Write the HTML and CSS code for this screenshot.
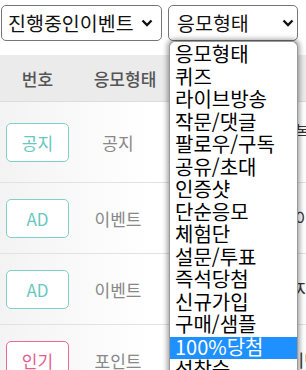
FILE: index.html
```html
<!DOCTYPE html>
<html lang="ko">
<head>
    <meta charset="UTF-8">
    <meta name="viewport" content="width=device-width, initial-scale=1.0">
    <title>이벤트 목록</title>
    <link rel="stylesheet" href="styles.css">
</head>
<body>
    <div class="filters">
        <div class="select status">
            <span>진행중인이벤트</span>
            <svg class="chevron" width="12" height="8" viewBox="0 0 12 8"><path d="M1.5 1.5 6 6l4.5-4.5" fill="none" stroke="#111" stroke-width="2.4"/></svg>
        </div>
        <div class="select type">
            <span>응모형태</span>
            <svg class="chevron" width="12" height="8" viewBox="0 0 12 8"><path d="M1.5 1.5 6 6l4.5-4.5" fill="none" stroke="#111" stroke-width="2.4"/></svg>
        </div>
    </div>

    <div class="dropdown">
        <div class="option">응모형태</div>
        <div class="option">퀴즈</div>
        <div class="option">라이브방송</div>
        <div class="option">작문/댓글</div>
        <div class="option">팔로우/구독</div>
        <div class="option">공유/초대</div>
        <div class="option">인증샷</div>
        <div class="option">단순응모</div>
        <div class="option">체험단</div>
        <div class="option">설문/투표</div>
        <div class="option">즉석당첨</div>
        <div class="option">신규가입</div>
        <div class="option">구매/샘플</div>
        <div class="option active">100%당첨</div>
        <div class="option">선착순</div>
    </div>

    <div class="table">
        <div class="row head">
            <div class="cell no">번호</div>
            <div class="cell kind">응모형태</div>
            <div class="cell title">이벤트명</div>
        </div>
        <div class="row first">
            <div class="cell no"><span class="badge teal">공지</span></div>
            <div class="cell kind">공지</div>
            <div class="cell title">이벤트 참여 시 중복 <br>당첨 불가 안내</div>
        </div>
        <div class="row">
            <div class="cell no"><span class="badge teal">AD</span></div>
            <div class="cell kind">이벤트</div>
            <div class="cell title">신규 회원 가입 라이브 이벤트</div>
        </div>
        <div class="row">
            <div class="cell no"><span class="badge teal">AD</span></div>
            <div class="cell kind">이벤트</div>
            <div class="cell title">출석 체크 포인트 지급 가이드</div>
        </div>
        <div class="row">
            <div class="cell no"><span class="badge pink">인기</span></div>
            <div class="cell kind">포인트</div>
            <div class="cell title">포인트 적립 2배 이벤트 진행</div>
        </div>
    </div>
</body>
</html>
```

FILE: styles.css
```css
body {
    margin: 0;
    width: 306px;
    height: 370px;
    overflow: hidden;
    font-family: "Noto Sans CJK KR", "Noto Sans", sans-serif;
    background: #fff;
    color: #222;
}

.filters {
    display: flex;
    gap: 6px;
    padding: 5px 0 0 1px;
}

.select {
    display: flex;
    align-items: center;
    justify-content: space-between;
    box-sizing: border-box;
    height: 36px;
    border: 1px solid #767676;
    border-radius: 5px;
    font-size: 19.5px;
    color: #111;
    background: #fff;
}

.select span {
    line-height: 1;
}

.status {
    width: 161px;
    padding: 0 8px 0 6px;
}

.type {
    width: 130px;
    padding: 0 3px 0 8px;
}

.dropdown {
    position: absolute;
    left: 169px;
    top: 41px;
    width: 129px;
    height: 340px;
    box-sizing: border-box;
    border: 1px solid #9a9a9a;
    border-bottom: none;
    border-radius: 6px 6px 0 0;
    background: #fff;
    box-shadow: 0 0 5px 2px rgba(0, 0, 0, 0.35);
    padding-top: 2px;
    z-index: 2;
}

.option {
    height: 22.5px;
    line-height: 20px;
    padding-left: 5px;
    font-size: 20px;
    color: #000;
    white-space: nowrap;
}

.option.active {
    background: #1e90ff;
    color: #fff;
}

.table {
    margin-top: 14px;
    width: 560px;
}

.row {
    display: grid;
    grid-template-columns: 75px 86px 1fr;
    height: 70px;
    border-bottom: 1px solid #e2e2e2;
    background: linear-gradient(to right, #f3f3f3, #fff 150px);
}

.row.head {
    height: 46px;
    background: #ebebeb;
    border-bottom: 1px solid #dcdcdc;
}

.row.first {
    height: 80px;
}

.cell {
    display: flex;
    align-items: center;
    justify-content: center;
    font-size: 17px;
    color: #888;
}

.head .cell {
    color: #555;
    font-weight: 500;
}

.head .kind {
    padding-left: 14px;
}

.cell.title {
    justify-content: flex-start;
    padding-left: 10px;
    color: #333;
    line-height: 22px;
}

.badge {
    display: flex;
    align-items: center;
    justify-content: center;
    box-sizing: border-box;
    width: 63px;
    height: 39px;
    border: 1px solid;
    border-radius: 5px;
    font-size: 17px;
    background: #fff;
}

.badge.teal {
    color: #67c7bf;
    border-color: #7fd0ca;
}

.badge.pink {
    color: #e55b91;
    border-color: #e8699b;
}
```
